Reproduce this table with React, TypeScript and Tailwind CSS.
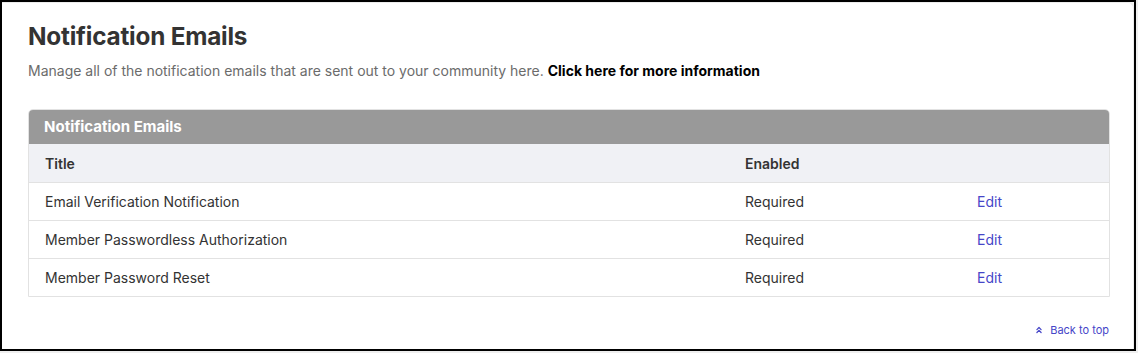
import React from "react";
import { ChevronsUp } from "lucide-react";

const emails = [
  { title: "Email Verification Notification", enabled: "Required" },
  { title: "Member Passwordless Authorization", enabled: "Required" },
  { title: "Member Password Reset", enabled: "Required" },
];

export default function App() {
  return (
    <div
      className="w-[1138px] h-[353px] bg-[#efefef]"
      style={{ fontFamily: "Inter, 'Noto Sans', sans-serif" }}
    >
      <div className="w-[1136px] h-[351px] border-2 border-black bg-[#f3f3f3]">
        <div className="h-full bg-white rounded-tr-md border-t border-r border-[#ececec] pl-[26px] pr-[24px] pt-[18px]">
          <h1 className="text-[24.3px] font-bold text-[#333] leading-[30px] tracking-[-0.2px]">
            Notification Emails
          </h1>
          <p className="mt-[11px] text-[14px] text-[#6b6b6b] leading-[18px]">
            Manage all of the notification emails that are sent out to your community here.{" "}
            <a className="font-bold text-black">Click here for more information</a>
          </p>

          {/* Panel */}
          <div className="mt-[29px] w-[1082px] rounded-t-[5px] border border-[#e2e2e2] overflow-hidden">
            <div className="h-[34px] bg-[#999999] px-[15px] flex items-center text-white font-bold text-[15px]">
              Notification Emails
            </div>
            <div className="grid grid-cols-[700px_232px_1fr] h-[38px] items-center px-[16px] bg-[#f0f1f5] text-[14px] font-semibold text-[#333]">
              <span>Title</span>
              <span>Enabled</span>
              <span></span>
            </div>
            {emails.map((row) => (
              <div
                key={row.title}
                className="grid grid-cols-[700px_232px_1fr] h-[38px] items-center px-[16px] border-t border-[#e2e2e2] text-[14px] text-[#333]"
              >
                <span>{row.title}</span>
                <span>{row.enabled}</span>
                <a className="text-[#4646c8]">Edit</a>
              </div>
            ))}
          </div>

          <div className="flex justify-end w-[1081px] mt-[25px]">
            <a className="flex items-center gap-[6px] text-[11px] text-[#4646c8]">
              <ChevronsUp size={10} strokeWidth={3} />
              Back to top
            </a>
          </div>
        </div>
      </div>
    </div>
  );
}
